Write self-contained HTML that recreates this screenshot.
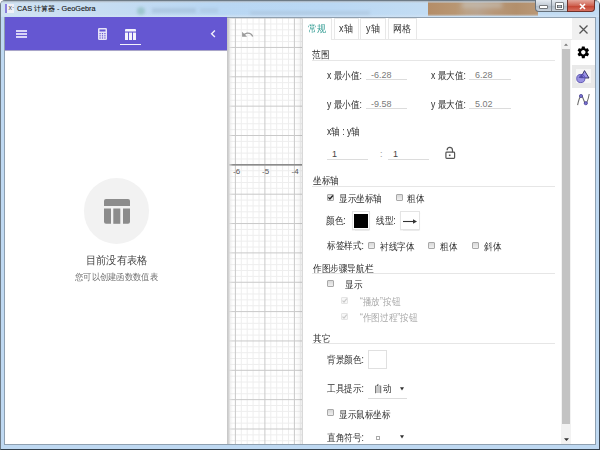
<!DOCTYPE html>
<html><head><meta charset="utf-8">
<style>
*{box-sizing:border-box;margin:0;padding:0}
html,body{width:600px;height:450px;overflow:hidden;background:#fff;font-family:"Liberation Sans",sans-serif;}
.a{position:absolute}
.t{position:absolute;white-space:nowrap;font-size:10px;line-height:11px;color:#2e2e2e;letter-spacing:0;transform-origin:0 0;transform:scaleX(0.86)}
.n{letter-spacing:0;color:#7a7a7a;font-size:9px;transform:none}
.line{position:absolute;height:1px;background:#e6e6e6}
.ul{position:absolute;height:1px;background:#dcdcdc}
.cb{position:absolute;width:7px;height:7px;border:1px solid #a8a8a8;background:linear-gradient(#d8d8d8,#f0f0f0);border-radius:1px}
.cbd{position:absolute;width:7px;height:7px;border:1px solid #e4e4e4;background:#f7f7f7;border-radius:1px}
.ck{position:absolute;width:7px;height:7px}
</style></head><body>
<!-- window frame -->
<div class="a" style="left:0;top:0;width:600px;height:450px;background:#bfd9f2;border:1px solid #6e7b86;border-right-color:#3c4652;border-bottom-color:#33404c;border-radius:5px 5px 0 0"></div>
<div class="a" style="left:1px;top:1px;width:598px;height:15px;background:linear-gradient(90deg,#d0e2f2 0%,#c4dcf2 20%,#b9d7f3 35%,#bad8f4 55%,#c2dcf3 70%);border-radius:4px 4px 0 0"></div>
<div class="a" style="left:428px;top:1px;width:110px;height:15px;background:linear-gradient(90deg,#b48d68 0%,#b89672 25%,#bba287 35%,#b9a38e 45%,#b79778 60%,#b28f6c 80%,#b99877 100%)"></div>
<div class="a" style="left:462px;top:2px;width:40px;height:6px;background:#c7c3bb;filter:blur(2px);opacity:.6"></div>
<div class="a" style="left:1px;top:1px;width:598px;height:2px;background:linear-gradient(#a9b4bf,rgba(220,235,248,0.3))"></div>
<div class="a" style="left:1px;top:14px;width:598px;height:3px;background:linear-gradient(rgba(205,225,244,0),#cfe2f4)"></div>
<!-- blurred background bits in title -->
<div class="a" style="left:137px;top:7px;width:8px;height:8px;border-radius:50%;background:#6aa89a;filter:blur(1.5px);opacity:.4"></div>
<div class="a" style="left:152px;top:8px;width:44px;height:5px;background:#8fa9c2;filter:blur(1.5px);opacity:.35"></div>
<div class="a" style="left:200px;top:8px;width:18px;height:5px;background:#a4bdd4;filter:blur(1.5px);opacity:.4"></div>
<div class="a" style="left:250px;top:11px;width:120px;height:4px;background:#a9c0d6;filter:blur(1.5px);opacity:.5"></div>
<!-- title icon -->
<div class="a" style="left:5px;top:4px;width:9px;height:9px;background:#f0f0f6"></div>
<div class="a" style="left:5px;top:4px;width:2px;height:9px;background:#8a80de"></div>
<div class="t" style="left:8.5px;top:3px;font-size:7px;line-height:10px;color:#555;letter-spacing:0;transform:none">x·</div>
<div class="t" style="left:17px;top:3px;font-size:7.3px;line-height:12px;color:#111;letter-spacing:0;transform:none;-webkit-text-stroke:0.1px #222">CAS 计算器 - GeoGebra</div>
<!-- window buttons -->
<div class="a" style="left:535px;top:0;width:33px;height:12px;border:1px solid #66717c;border-top:none;border-radius:0 0 0 4px;background:linear-gradient(#e4eaf1,#c3ccd6 50%,#aeb9c5 51%,#c8d2dc)"></div>
<div class="a" style="left:551px;top:0;width:1px;height:11px;background:#7d8792"></div>
<div class="a" style="left:567px;top:0;width:28px;height:12px;border:1px solid #6f3029;border-top:none;border-radius:0 0 4px 0;background:linear-gradient(#e4a89c,#cf6352 50%,#c2412e 51%,#d77060)"></div>
<div class="a" style="left:540px;top:6px;width:7px;height:2px;background:#fff;box-shadow:0 0 0 0.6px #444"></div>
<div class="a" style="left:556px;top:3px;width:7px;height:6px;border:1px solid #fff;box-shadow:0 0 0 0.6px #444, inset 0 0 0 0.6px #444;border-top-width:2px"></div>
<svg class="a" style="left:578.5px;top:3px" width="7" height="7" viewBox="0 0 7 7"><path d="M1 1 L6 6 M6 1 L1 6" stroke="#fff" stroke-width="1.6"/></svg>

<!-- content -->
<div class="a" style="left:4px;top:17px;width:592px;height:428px;background:#fff;border:1px solid #8fa0b0"></div>
<div class="a" style="left:5px;top:17px;width:222px;height:33px;background:#6557d2;box-shadow:0 0.5px 0.5px rgba(40,30,120,.4)"></div>
<!-- hamburger -->
<div class="a" style="left:16px;top:30px;width:10.6px;height:1.5px;background:#d9d4f7"></div>
<div class="a" style="left:16px;top:33px;width:10.6px;height:1.5px;background:#d9d4f7"></div>
<div class="a" style="left:16px;top:36px;width:10.6px;height:1.5px;background:#d9d4f7"></div>
<!-- calc icon -->
<svg class="a" style="left:98px;top:28px" width="9" height="12" viewBox="0 0 9 12"><rect x="0" y="0" width="9" height="12" rx="1.2" fill="#e6e3f8"/><rect x="1.5" y="1.5" width="6" height="2" fill="#6557d2"/><g fill="#6557d2"><rect x="1.5" y="5" width="1.2" height="1.2"/><rect x="3.9" y="5" width="1.2" height="1.2"/><rect x="6.3" y="5" width="1.2" height="1.2"/><rect x="1.5" y="7.2" width="1.2" height="1.2"/><rect x="3.9" y="7.2" width="1.2" height="1.2"/><rect x="6.3" y="7.2" width="1.2" height="1.2"/><rect x="1.5" y="9.4" width="1.2" height="1.2"/><rect x="3.9" y="9.4" width="1.2" height="1.2"/><rect x="6.3" y="9.4" width="1.2" height="1.2"/></g></svg>
<!-- table icon -->
<svg class="a" style="left:125px;top:29px" width="11" height="11" viewBox="0 0 11 11"><g fill="#f4f3fc"><path d="M1 0 H10 Q11 0 11 1 V2.6 H0 V1 Q0 0 1 0Z"/><rect x="0" y="3.6" width="3" height="7.4"/><rect x="4" y="3.6" width="3" height="7.4"/><rect x="8" y="3.6" width="3" height="7.4"/></g></svg>
<div class="a" style="left:120px;top:43.6px;width:21px;height:1.6px;background:#f4f3fc"></div>
<!-- chevron -->
<svg class="a" style="left:209px;top:29px" width="8" height="10" viewBox="0 0 8 10"><path d="M5.9 1.6 L2.6 4.8 L5.9 8" fill="none" stroke="#f2f0fb" stroke-width="1.4"/></svg>

<!-- left empty state -->
<div class="a" style="left:83.5px;top:178.4px;width:65.5px;height:65.5px;border-radius:50%;background:#f2f2f2"></div>
<svg class="a" style="left:104px;top:199px" width="26" height="25" viewBox="0 0 26 25"><g fill="#8c8c8c"><path d="M2 0 H24 Q26 0 26 2 V7 H0 V2 Q0 0 2 0Z"/><path d="M0 9.5 H7 V24.8 H2 Q0 24.8 0 22.8Z"/><rect x="9.3" y="9.5" width="7" height="15.3"/><path d="M19 9.5 H26 V22.8 Q26 24.8 24 24.8 H19Z"/></g></svg>
<div class="t" style="left:86px;top:254px;font-size:11px;line-height:13px;color:#444;transform:scaleX(0.93)">目前没有表格</div>
<div class="t" style="left:75px;top:272px;font-size:9px;line-height:10px;color:#707070;transform:scaleX(0.92)">您可以创建函数数值表</div>

<!-- graphics view -->
<div class="a" style="left:228px;top:18px;width:75px;height:426px;background:#fff;overflow:hidden">
<svg width="75" height="426" style="position:absolute;left:0;top:0">
<path d="M1.50 0V426M13.30 0V426M19.20 0V426M25.10 0V426M31.00 0V426M42.80 0V426M48.70 0V426M54.60 0V426M60.50 0V426M72.30 0V426M0 5.97H75M0 11.84H75M0 17.71H75M0 23.58H75M0 35.32H75M0 41.19H75M0 47.06H75M0 52.93H75M0 64.67H75M0 70.54H75M0 76.41H75M0 82.28H75M0 94.02H75M0 99.89H75M0 105.76H75M0 111.63H75M0 123.37H75M0 129.24H75M0 135.11H75M0 140.98H75M0 152.72H75M0 158.59H75M0 164.46H75M0 170.33H75M0 182.07H75M0 187.94H75M0 193.81H75M0 199.68H75M0 211.42H75M0 217.29H75M0 223.16H75M0 229.03H75M0 240.77H75M0 246.64H75M0 252.51H75M0 258.38H75M0 270.12H75M0 275.99H75M0 281.86H75M0 287.73H75M0 299.47H75M0 305.34H75M0 311.21H75M0 317.08H75M0 328.82H75M0 334.69H75M0 340.56H75M0 346.43H75M0 358.17H75M0 364.04H75M0 369.91H75M0 375.78H75M0 387.52H75M0 393.39H75M0 399.26H75M0 405.13H75M0 416.87H75M0 422.74H75" stroke="#eeeeee" stroke-width="1" fill="none"/>
<path d="M7.40 0V426M36.90 0V426M66.40 0V426M0 0.10H75M0 29.45H75M0 58.80H75M0 88.15H75M0 117.50H75M0 146.85H75M0 176.20H75M0 205.55H75M0 234.90H75M0 264.25H75M0 293.60H75M0 322.95H75M0 352.30H75M0 381.65H75M0 411.00H75" stroke="#c9c9c9" stroke-width="1" fill="none"/>

<rect x="0" y="146" width="75" height="1.6" fill="#8c8c8c"/>
</svg>
<div class="t n" style="left:5px;top:148px;font-size:8px;color:#555">-6</div>
<div class="t n" style="left:34px;top:148px;font-size:8px;color:#555">-5</div>
<div class="t n" style="left:63.5px;top:148px;font-size:8px;color:#555">-4</div>
<svg class="a" style="left:13.4px;top:10px" width="13.2" height="13.2" viewBox="0 0 24 24"><path fill="#9a9a9a" d="M12.5 8c-2.65 0-5.05.99-6.9 2.6L2 7v9h9l-3.62-3.62c1.39-1.16 3.16-1.88 5.12-1.88 3.54 0 6.55 2.31 7.6 5.5l2.37-.78C21.08 11.03 17.15 8 12.5 8z"/></svg>
</div>
<div class="a" style="left:227px;top:18px;width:6px;height:426px;background:linear-gradient(90deg,#c4c4c4 0,#d2d2d2 1.5px,rgba(230,230,230,0.6) 3px,rgba(255,255,255,0))"></div>
<div class="a" style="left:295px;top:18px;width:8px;height:426px;background:linear-gradient(90deg,rgba(0,0,0,0),rgba(0,0,0,0.035) 60%,rgba(0,0,0,0.09))"></div>
<div class="a" style="left:302px;top:18px;width:1px;height:426px;background:#d8d8d8"></div>

<!-- tabs -->
<div class="a" style="left:303px;top:18px;width:29px;height:22px;border:1px solid #e8e8e8;border-bottom:none;border-left:none"></div>
<div class="a" style="left:334px;top:18px;width:25px;height:22px;border:1px solid #e8e8e8"></div>
<div class="a" style="left:360px;top:18px;width:26px;height:22px;border:1px solid #e8e8e8"></div>
<div class="a" style="left:388px;top:18px;width:29px;height:22px;border:1px solid #e8e8e8"></div>
<div class="line" style="left:332px;top:39px;width:240px;background:#e8e8e8"></div>
<div class="a" style="left:334px;top:39px;width:1px;height:1px;background:#e8e8e8"></div>
<div class="t" style="left:308px;top:23px;font-size:10px;color:#329c93;transform:scaleX(0.9)">常规</div>
<div class="t" style="left:339px;top:23px;font-size:10px;color:#333;transform:scaleX(0.9)">x轴</div>
<div class="t" style="left:366px;top:23px;font-size:10px;color:#333;transform:scaleX(0.9)">y轴</div>
<div class="t" style="left:393px;top:23px;font-size:10px;color:#333;transform:scaleX(0.9)">网格</div>

<!-- section 范围 -->
<div class="t" style="left:312px;top:49px">范围</div>
<div class="line" style="left:312px;top:60px;width:243px"></div>
<div class="t" style="left:327px;top:70px">x 最小值:</div>
<div class="ul" style="left:366px;top:79px;width:41px"></div>
<div class="t n" style="left:371px;top:70px">-6.28</div>
<div class="t" style="left:431px;top:70px">x 最大值:</div>
<div class="ul" style="left:469px;top:79px;width:42px"></div>
<div class="t n" style="left:475px;top:70px">6.28</div>

<div class="t" style="left:327px;top:99px">y 最小值:</div>
<div class="ul" style="left:366px;top:108px;width:41px"></div>
<div class="t n" style="left:371px;top:99px">-9.58</div>
<div class="t" style="left:431px;top:99px">y 最大值:</div>
<div class="ul" style="left:469px;top:108px;width:42px"></div>
<div class="t n" style="left:475px;top:99px">5.02</div>

<div class="t" style="left:327px;top:126px">x轴 : y轴</div>
<div class="ul" style="left:327px;top:159px;width:41px"></div>
<div class="t n" style="left:332px;top:149px;color:#444">1</div>
<div class="t n" style="left:380px;top:149px;color:#999">:</div>
<div class="ul" style="left:388px;top:159px;width:41px"></div>
<div class="t n" style="left:393px;top:149px;color:#444">1</div>
<svg class="a" style="left:444px;top:146px" width="12" height="14" viewBox="0 0 12 14"><path d="M3.1 4.3 Q3.1 1.3 5.8 1.3 Q8.5 1.3 8.5 4.2 V6.2" fill="none" stroke="#555" stroke-width="1.2"/><rect x="1.9" y="6.1" width="8.7" height="6.2" rx="0.8" fill="none" stroke="#555" stroke-width="1.2"/><rect x="4.9" y="8.5" width="1.6" height="1.6" fill="#555"/></svg>

<!-- section 坐标轴 -->
<div class="t" style="left:313px;top:175px">坐标轴</div>
<div class="line" style="left:312px;top:186px;width:243px"></div>
<div class="cb" style="left:327px;top:194px"></div>
<svg class="ck" style="left:327px;top:194px" viewBox="0 0 7 7"><path d="M1.4 3.4 L2.9 5 L5.9 1.5" fill="none" stroke="#222" stroke-width="1.3"/></svg>
<div class="t" style="left:339px;top:193px">显示坐标轴</div>
<div class="cb" style="left:396px;top:194px"></div>
<div class="t" style="left:407px;top:193px">粗体</div>
<div class="t" style="left:326px;top:215px">颜色:</div>
<div class="a" style="left:352px;top:211px;width:18px;height:19px;border:1px solid #e4e4e4;background:#fff;box-shadow:0 0.5px 1px rgba(0,0,0,.08)"></div>
<div class="a" style="left:354px;top:214px;width:14px;height:14px;background:#000"></div>
<div class="t" style="left:376px;top:215px">线型:</div>
<div class="a" style="left:400px;top:211px;width:20px;height:19px;border:1px solid #e4e4e4;background:#fff;box-shadow:0 0.5px 1px rgba(0,0,0,.08)"></div>
<svg class="a" style="left:402px;top:218px" width="16" height="7" viewBox="0 0 16 7"><path d="M1 3.5 H12" stroke="#333" stroke-width="1.1"/><path d="M11 1.2 L15 3.5 L11 5.8Z" fill="#333"/></svg>
<div class="t" style="left:327px;top:240px">标签样式:</div>
<div class="cb" style="left:368px;top:242px"></div>
<div class="t" style="left:380px;top:241px">衬线字体</div>
<div class="cb" style="left:428px;top:242px"></div>
<div class="t" style="left:440px;top:241px">粗体</div>
<div class="cb" style="left:472px;top:242px"></div>
<div class="t" style="left:484px;top:241px">斜体</div>

<!-- section 作图步骤导航栏 -->
<div class="t" style="left:313px;top:263px">作图步骤导航栏</div>
<div class="line" style="left:312px;top:273px;width:243px"></div>
<div class="cb" style="left:327px;top:280px"></div>
<div class="t" style="left:345px;top:279px">显示</div>
<div class="cbd" style="left:341px;top:297px"></div><svg class="ck" style="left:341px;top:297px" viewBox="0 0 7 7"><path d="M1.5 3.6 L3 5.2 L5.8 1.6" fill="none" stroke="#c8c8c8" stroke-width="1.1"/></svg>
<div class="t" style="left:360px;top:296px;color:#a8a8a8">“播放”按钮</div>
<div class="cbd" style="left:341px;top:313px"></div><svg class="ck" style="left:341px;top:313px" viewBox="0 0 7 7"><path d="M1.5 3.6 L3 5.2 L5.8 1.6" fill="none" stroke="#c8c8c8" stroke-width="1.1"/></svg>
<div class="t" style="left:360px;top:312px;color:#a8a8a8">“作图过程”按钮</div>

<!-- section 其它 -->
<div class="t" style="left:313px;top:333px">其它</div>
<div class="line" style="left:312px;top:343px;width:243px"></div>
<div class="t" style="left:327px;top:354px">背景颜色:</div>
<div class="a" style="left:368px;top:350px;width:19px;height:19px;border:1px solid #e0e0e0;background:#fff"></div>
<div class="t" style="left:327px;top:383px">工具提示:</div>
<div class="t" style="left:374px;top:383px">自动</div>
<svg class="a" style="left:400px;top:386.5px" width="4" height="4" viewBox="0 0 4 4"><path d="M0 0.3 H4 L2 3.6Z" fill="#333"/></svg>
<div class="ul" style="left:368px;top:398px;width:39px"></div>
<div class="cb" style="left:327px;top:409px"></div>
<div class="t" style="left:339px;top:409px">显示鼠标坐标</div>
<div class="t" style="left:327px;top:432px">直角符号:</div>
<div class="a" style="left:376px;top:436px;width:4px;height:3.5px;border:1px solid #aaa"></div>
<svg class="a" style="left:400px;top:434.5px" width="4" height="4" viewBox="0 0 4 4"><path d="M0 0.3 H4 L2 3.6Z" fill="#333"/></svg>

<!-- scrollbar -->
<div class="a" style="left:561px;top:40px;width:10px;height:404px;background:#f2f2f2"></div>
<div class="a" style="left:562px;top:49px;width:8px;height:375px;background:#c3c3c3"></div>
<svg class="a" style="left:564px;top:42.5px" width="4" height="3" viewBox="0 0 4 3"><path d="M0 2.8 H4 L2 0.4Z" fill="#777"/></svg>
<svg class="a" style="left:563.5px;top:437.5px" width="5" height="3" viewBox="0 0 5 3"><path d="M0 0.2 H5 L2.5 2.9Z" fill="#333"/></svg>

<!-- right sidebar -->
<div class="a" style="left:572px;top:18px;width:23px;height:22px;background:#f0f0f0"></div>
<svg class="a" style="left:579px;top:25px" width="9" height="9" viewBox="0 0 9 9"><path d="M0.5 0.5 L8.5 8.5 M8.5 0.5 L0.5 8.5" stroke="#555" stroke-width="1.25"/></svg>
<svg class="a" style="left:576px;top:44.9px" width="14.6" height="14.6" viewBox="0 0 24 24"><path fill="#000" d="M19.14 12.94c.04-.3.06-.61.06-.94 0-.32-.02-.64-.07-.94l2.030-1.580a.49.49 0 0 0 .12-.61l-1.920-3.320a.49.49 0 0 0-.59-.22l-2.390.96c-.5-.38-1.030-.7-1.620-.94l-.36-2.540a.484.484 0 0 0-.48-.41h-3.840c-.24 0-.43.17-.47.41l-.36 2.540c-.59.24-1.130.57-1.620.94l-2.390-.96a.49.49 0 0 0-.59.22L2.740 8.870c-.12.21-.08.47.12.61l2.030 1.580c-.05.3-.09.63-.09.94s.02.64.07.94l-2.030 1.580a.49.49 0 0 0-.12.61l1.920 3.320c.12.22.37.29.59.22l2.390-.96c.5.38 1.030.7 1.620.94l.36 2.540c.05.24.24.41.48.41h3.840c.24 0 .44-.17.47-.41l.36-2.540c.59-.24 1.130-.56 1.620-.94l2.390.96c.22.08.47 0 .59-.22l1.920-3.320c.12-.22.07-.47-.12-.61l-2.010-1.580zM12 15.600c-1.980 0-3.600-1.620-3.600-3.600s1.620-3.600 3.600-3.600 3.600 1.620 3.600 3.600-1.620 3.600-3.600 3.600z"/></svg>
<div class="a" style="left:572px;top:65px;width:23px;height:23px;background:#e9e9e9"></div>
<div class="a" style="left:576px;top:69px;width:15px;height:14px;background:#f6f6f6"></div>
<svg class="a" style="left:576px;top:69px" width="15" height="15" viewBox="0 0 15 15"><path d="M8.5 1.6 L13 9 H4.5Z" fill="#9a93e8" stroke="#2e2a5a" stroke-width="0.9" stroke-linejoin="round"/><circle cx="4.8" cy="9.5" r="4.1" fill="#8880dd" fill-opacity="0.85" stroke="#4a40a8" stroke-width="0.8"/><path d="M5.5 5.6 L8.2 9 H2.6 Q3.5 6.4 5.5 5.6Z" fill="#3a3490" opacity="0.7"/></svg>
<svg class="a" style="left:577px;top:93px" width="14" height="13" viewBox="0 0 14 13"><path d="M0.6 12.2 Q2.2 4 4 3 Q5.2 2.6 6.5 6.5 Q7.8 10.4 9 10.2 Q10.6 9.5 12.2 1" fill="none" stroke="#6a6a6a" stroke-width="1.05"/><circle cx="4" cy="3" r="1.6" fill="#7a72d0" stroke="#3c358c" stroke-width="0.7"/><circle cx="8.8" cy="10.2" r="1.6" fill="#7a72d0" stroke="#3c358c" stroke-width="0.7"/></svg>
</body></html>
